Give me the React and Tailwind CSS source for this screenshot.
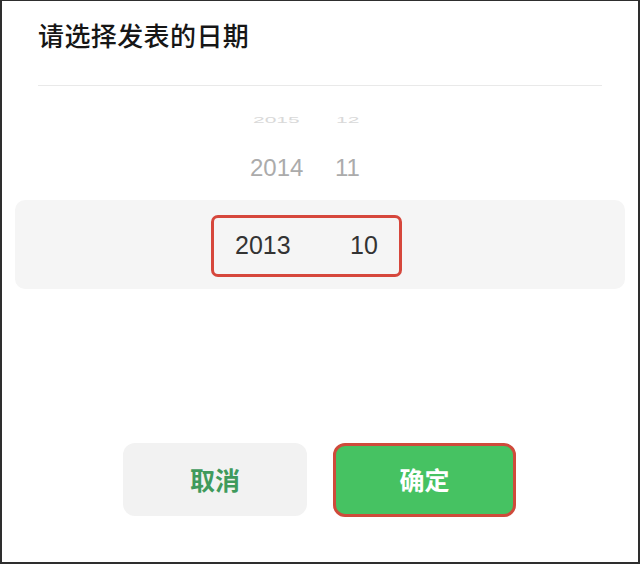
export default function App() {
  const num = { fontFamily: '"Liberation Sans", "Noto Sans", sans-serif' };
  const cjk = { fontFamily: '"Noto Sans CJK SC", "Noto Sans", sans-serif' };

  return (
    <div className="w-[640px] h-[564px] bg-white border-l-2 border-t border-r-2 border-b-2 border-[#2e2e2e] overflow-hidden">
      {/* header */}
      <div className="pt-[16px] px-[36px]">
        <h1 style={cjk} className="text-[26px] leading-[36px] font-medium text-[#161616] tracking-[0.4px]">
          请选择发表的日期
        </h1>
      </div>
      <div className="mt-[32px] mx-[36px] h-px bg-[#e9e9e9]"></div>

      {/* wheel */}
      <div style={num}>
        <div className="mt-[10px] h-[48px] flex items-center pl-[251px] text-[#d9d9d9] text-[21px]">
          <span className="w-[83px] inline-block scale-y-[0.42]">2015</span>
          <span className="inline-block scale-y-[0.42]">12</span>
        </div>
        <div className="h-[48px] flex items-center pl-[248px] text-[#ababab] text-[24px]">
          <span className="w-[85px]">2014</span>
          <span>11</span>
        </div>
        <div className="mt-[8px] mx-[13px] h-[89px] bg-[#f5f5f5] rounded-[10px] pt-[15px]">
          <div className="ml-[196px] w-[191px] h-[62px] border-[3px] border-[#d6473c] rounded-[7px] flex items-center pl-[21px] text-[#333333] text-[25px]">
            <span className="w-[115px]">2013</span>
            <span>10</span>
          </div>
        </div>
      </div>

      {/* actions */}
      <div style={cjk} className="mt-[154px] flex pl-[121px] gap-[26px]">
        <button className="w-[184px] h-[73px] rounded-[12px] bg-[#f2f2f2] text-[#3f9a5c] text-[25px] font-semibold">
          取消
        </button>
        <button className="w-[183px] h-[74px] rounded-[12px] bg-[#46c262] border-[3px] border-[#cf4a3b] text-white text-[25px] font-semibold">
          确定
        </button>
      </div>
    </div>
  );
}
